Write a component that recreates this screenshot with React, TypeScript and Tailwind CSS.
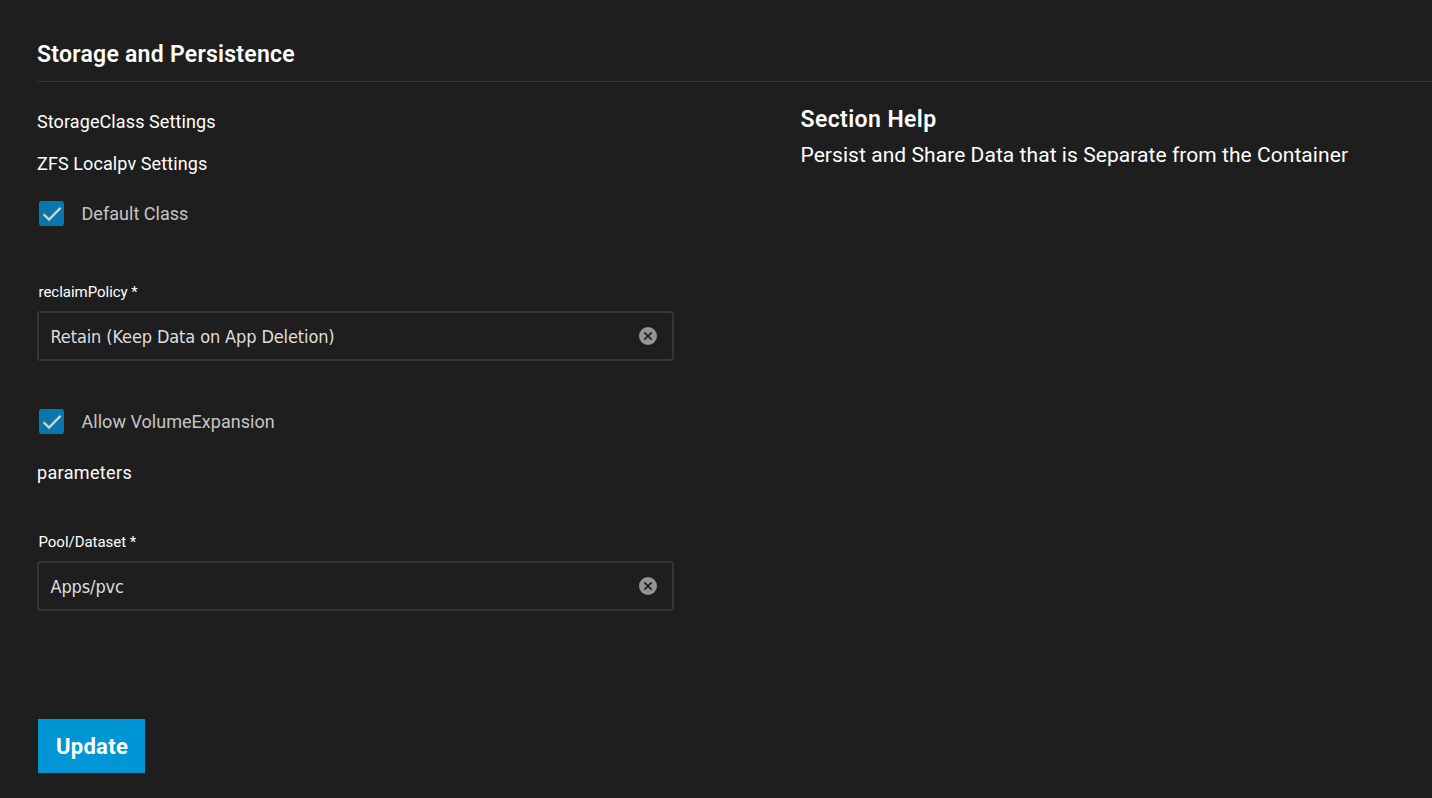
import type { ReactNode } from 'react';

function CheckRow({ children }: { children: ReactNode }) {
  return (
    <label className="flex h-[25px] items-center pl-[2px] text-[18px] leading-6 text-[#c5c5c5]">
      <span className="flex size-[25px] shrink-0 items-center justify-center rounded-[3px] bg-[#0878ab]">
        <svg viewBox="0 0 25 25" className="size-[25px]" fill="none" stroke="#d2d2d2" strokeWidth="2.3">
          <path d="M4.6 13.2 L10 18.6 L21.6 6.9" />
        </svg>
      </span>
      <span className="ml-[17.5px] tracking-[0.03px]">{children}</span>
    </label>
  );
}

function Field({ label, value }: { label: string; value: string }) {
  return (
    <div className="w-[637px]">
      <div className="pl-[1.5px] text-[15px] leading-5 tracking-[-0.03px] text-white">{label}</div>
      <div className="mt-[9px] flex h-[50px] items-center justify-between rounded-[3px] border-2 border-[#353535] pl-[11.5px] pr-[15px]">
        <span className="pt-[2px] font-['DejaVu_Sans_Condensed','DejaVu_Sans',sans-serif] text-[18px] leading-6 tracking-[-0.12px] text-[#dedede]">
          {value}
        </span>
        <svg viewBox="0 0 18 18" className="size-[18px]">
          <circle cx="9" cy="9" r="9" fill="#949494" />
          <path d="M5.3 5.3 L12.7 12.7 M12.7 5.3 L5.3 12.7" stroke="#1e1e1e" strokeWidth="1.7" />
        </svg>
      </div>
    </div>
  );
}

export default function App() {
  return (
    <main className="flex h-[798px] w-full flex-col overflow-hidden bg-[#1e1e1e] pl-[37px] pt-10 font-['Roboto',sans-serif] text-white">
      <h2 className="h-[42px] shrink-0 border-b border-[#373737] text-[23px] font-semibold leading-[30px] tracking-[0.26px]">
        Storage and Persistence
      </h2>
      <div className="flex">
        <section className="w-[763.5px] shrink-0 pt-7">
          <h3 className="text-[18px] leading-6 tracking-[0.1px]">StorageClass Settings</h3>
          <h3 className="mt-[18px] text-[18px] leading-6 tracking-[0.1px]">ZFS Localpv Settings</h3>
          <div className="mt-[25px]">
            <CheckRow>Default Class</CheckRow>
          </div>
          <div className="mt-14">
            <Field label="reclaimPolicy *" value="Retain (Keep Data on App Deletion)" />
          </div>
          <div className="mt-12">
            <CheckRow>Allow VolumeExpansion</CheckRow>
          </div>
          <h3 className="mt-[27px] text-[18px] leading-6 tracking-[0.35px]">parameters</h3>
          <div className="mt-[47px]">
            <Field label="Pool/Dataset *" value="Apps/pvc" />
          </div>
          <button className="ml-px mt-[108px] flex h-[54px] w-[107px] items-center justify-center bg-[#0095d5] pl-px text-[22px] font-bold tracking-[0.3px] text-white">
            Update
          </button>
        </section>
        <aside className="pt-[23px]">
          <h2 className="text-[23px] font-semibold leading-[30px] tracking-[0.4px]">Section Help</h2>
          <p className="mt-1.5 text-[21px] leading-7 tracking-[0.06px]">
            Persist and Share Data that is Separate from the Container
          </p>
        </aside>
      </div>
    </main>
  );
}
